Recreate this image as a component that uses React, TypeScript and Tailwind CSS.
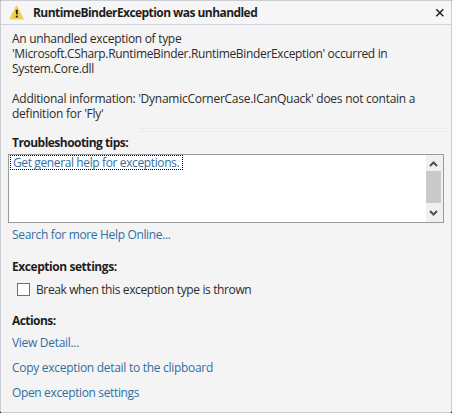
import type { ReactNode } from 'react';

interface TextProps {
  children: ReactNode;
  className?: string;
}

function Heading({ children, className = '' }: TextProps) {
  return <h2 className={`h-[15px] font-bold whitespace-nowrap text-[#1e1e1e] ${className}`}>{children}</h2>;
}

function Link({ children, className = '' }: TextProps) {
  return (
    <a href="#" className={`block w-fit h-[15px] whitespace-nowrap text-[#2f6f9f] ${className}`}>
      {children}
    </a>
  );
}

function WarningIcon() {
  return (
    <svg width="15" height="15" viewBox="0 0 15 15" className="shrink-0">
      <path d="M7.6 1.2 14 13.8H1Z" fill="#f4cd3c" stroke="#f0d060" strokeWidth="1.4" strokeLinejoin="round" />
      <path d="M6.7 4.8h2.2l-.4 4.8H7.1ZM6.8 10.7h2v1.9h-2Z" fill="#1e1e1e" />
    </svg>
  );
}

function TipsList() {
  return (
    <div className="ml-[7px] w-[436px] h-[69px] flex justify-between bg-white border border-[#999a9d]">
      <div className="w-[173px] h-[15px] ml-px border border-dotted border-black pl-[2px]">
        <Link className="-mt-px tracking-[-0.38px]">Get general help for exceptions.</Link>
      </div>
      <div className="w-[17px] h-full flex flex-col bg-[#f0f0f0]">
        <svg width="17" height="16" viewBox="0 0 17 16" fill="none" stroke="#505050" strokeWidth="2">
          <path d="m4 11 3.5-3.5L11 11" />
        </svg>
        <div className="w-[15px] h-[32px] bg-[#cacaca]" />
        <svg width="17" height="19" viewBox="0 0 17 19" fill="none" stroke="#505050" strokeWidth="2">
          <path d="m4 8 3.5 3.5L11 8" />
        </svg>
      </div>
    </div>
  );
}

export default function App() {
  return (
    <div className="w-[452px] h-[413px] bg-black overflow-hidden">
      <div className="w-[452px] h-[413px] rounded-b-[2px] bg-[#f4f4f5] border border-[#cbccd4] font-['Open_Sans','Noto_Sans',sans-serif] text-[12px] leading-[15px] text-[#2b2b2b]">
        <header className="h-[24px] flex items-center border-b border-[#d0d2dc] pl-[8px] pr-[6px] bg-[#f6f6f7]">
          <WarningIcon />
          <h1 className="ml-[9px] font-bold whitespace-nowrap text-[#1e1e1e] tracking-[-0.56px]">
            RuntimeBinderException was unhandled
          </h1>
          <button className="ml-auto" aria-label="Close">
            <svg width="10" height="10" viewBox="0 0 10 10" stroke="#1e1e1e" strokeWidth="1.5">
              <path d="m1.3 1.3 7 7M8.3 1.3l-7 7" />
            </svg>
          </button>
        </header>

        <section className="h-[103px] pt-[6px] pl-[11px] whitespace-nowrap">
          <p className="tracking-[-0.3px]">An unhandled exception of type</p>
          <p className="tracking-[-0.34px]">'Microsoft.CSharp.RuntimeBinder.RuntimeBinderException' occurred in</p>
          <p className="tracking-[-0.3px]">System.Core.dll</p>
          <p className="mt-[15px] tracking-[-0.26px]">Additional information: 'DynamicCornerCase.ICanQuack' does not contain a</p>
          <p className="tracking-[-0.24px]">definition for 'Fly'</p>
        </section>

        <section className="h-[124px]">
          <div className="h-[4px] ml-[138px] mr-[4px] border-y border-[#ececef]" />
          <Heading className="mt-[3px] ml-[11px] tracking-[-0.53px]">Troubleshooting tips:</Heading>
          <div className="mt-[4px]">
            <TipsList />
          </div>
          <Link className="ml-[11px] mt-[4px] tracking-[-0.34px]">Search for more Help Online...</Link>
        </section>

        <section className="h-[54px] mr-[4px] border-t border-[#f0f0f2]">
          <Heading className="mt-[6px] ml-[11px] tracking-[-0.44px]">Exception settings:</Heading>
          <label className="mt-[8px] ml-[16px] flex items-center h-[15px]">
            <span className="size-[13px] shrink-0 bg-white border border-[#707070]" />
            <span className="ml-[6px] whitespace-nowrap tracking-[-0.38px]">Break when this exception type is thrown</span>
          </label>
        </section>

        <section className="mr-[4px] border-t border-[#f1f1f3] pt-[6px] pl-[11px]">
          <Heading className="tracking-[-0.55px]">Actions:</Heading>
          <Link className="mt-[7px] tracking-[-0.3px]">View Detail...</Link>
          <Link className="mt-[10px] tracking-[-0.29px]">Copy exception detail to the clipboard</Link>
          <Link className="mt-[10px] tracking-[-0.36px]">Open exception settings</Link>
        </section>
      </div>
    </div>
  );
}
